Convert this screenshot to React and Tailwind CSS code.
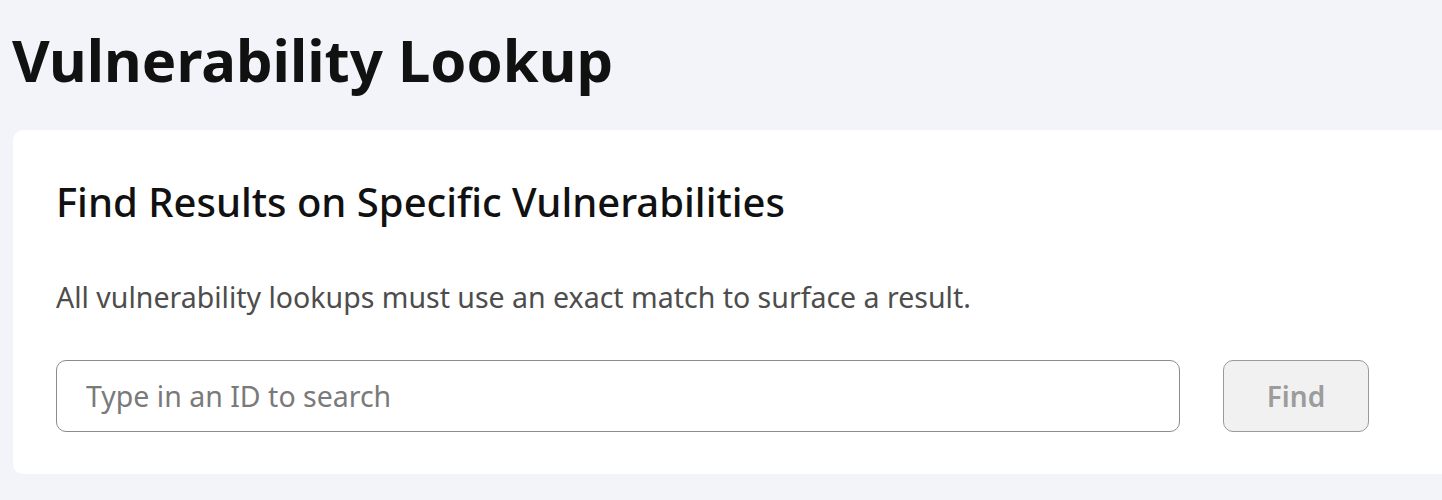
import React from "react";

export default function App() {
  return (
    <div
      className="min-h-[500px] overflow-hidden bg-[#f3f4f9] text-[#111]"
      style={{ fontFamily: '"Noto Sans", "Open Sans", sans-serif' }}
    >
      {/* Page title */}
      <h1 className="pl-[12px] pt-[22px] text-[58px] font-bold leading-[76px] text-[#111]">
        Vulnerability Lookup
      </h1>

      {/* Lookup card */}
      <div className="ml-[13px] mt-[32px] rounded-l-[10px] bg-white pb-[42px] pl-[43px] pr-[73px] pt-[46px]">
        <h2 className="text-[40px] font-medium leading-[52px] text-[#111]">
          Find Results on Specific Vulnerabilities
        </h2>
        <p className="mt-[51px] text-[28.5px] leading-[36px] text-[#4d4d4d]">
          All vulnerability lookups must use an exact match to surface a result.
        </p>

        <div className="mt-[45px] flex items-center gap-[43px]">
          <input
            type="text"
            placeholder="Type in an ID to search"
            className="h-[72px] flex-1 rounded-[10px] border border-[#8c8c8c] bg-white px-[29px] text-[28.5px] text-[#333] outline-none placeholder:text-[#7a7a7a]"
          />
          <button
            type="button"
            disabled
            className="h-[72px] w-[146px] rounded-[10px] border border-[#9a9a9a] bg-[#f1f1f1] text-[28px] font-semibold text-[#9c9c9c]"
          >
            Find
          </button>
        </div>
      </div>
    </div>
  );
}
